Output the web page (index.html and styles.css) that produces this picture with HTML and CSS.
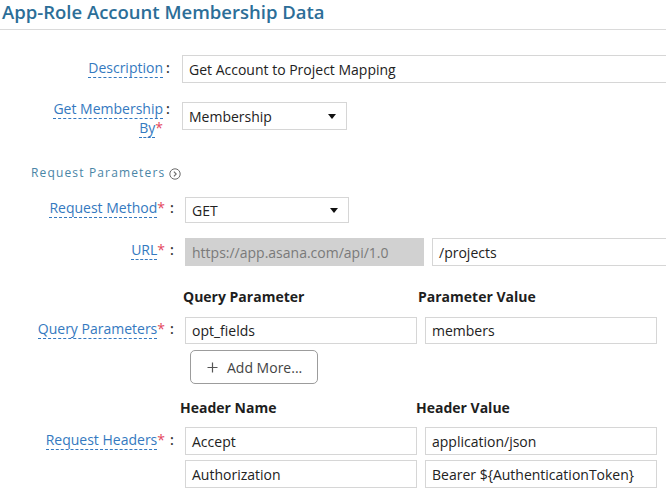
FILE: index.html
```html
<!DOCTYPE html>
<html>
<head>
<meta charset="utf-8">
<link rel="stylesheet" href="styles.css">
</head>
<body>
<div class="page">
  <h1 class="title">App-Role Account Membership Data</h1>

  <div class="sec-top">
    <div class="row row-desc">
      <div class="lbl lbl-up lbl-desc"><span class="lt">Description</span></div>
      <div class="colon colon-up colon-desc">:</div>
      <div class="field field-desc">Get Account to Project Mapping</div>
    </div>
    <div class="row row-memb">
      <div class="lbl lbl-up lbl-memb"><span class="lt">Get Membership By</span><span class="req">*</span></div>
      <div class="colon colon-up colon-memb">:</div>
      <div class="field select select-memb"><span>Membership</span><span class="caret"></span></div>
    </div>
  </div>

  <div class="sec-title">Request Parameters
    <svg class="info" width="12" height="12" viewBox="0 0 12 12"><circle cx="6" cy="6" r="5.2" fill="none" stroke="#6b6b6b" stroke-width="1"/><path d="M4.9 3.6 L7.2 6 L4.9 8.4" fill="none" stroke="#6b6b6b" stroke-width="1.1"/></svg>
  </div>

  <div class="row row-method">
    <div class="lbl lbl-low lbl-p1"><span class="lt">Request Method</span><span class="req">*</span></div>
    <div class="colon colon-low colon-p1">:</div>
    <div class="field select select-method"><span>GET</span><span class="caret"></span></div>
  </div>

  <div class="row row-url">
    <div class="lbl lbl-low lbl-p2"><span class="lt">URL</span><span class="req">*</span></div>
    <div class="colon colon-low colon-p2">:</div>
    <div class="field field-base">https://app.asana.com/api/1.0</div>
    <div class="field field-path">/projects</div>
  </div>

  <div class="hrow hrow-query">
    <div class="hcol hcol-query">Query Parameter</div>
    <div class="hcol">Parameter Value</div>
  </div>

  <div class="row row-opt">
    <div class="lbl lbl-low lbl-p2"><span class="lt">Query Parameters</span><span class="req">*</span></div>
    <div class="colon colon-low colon-p2">:</div>
    <div class="field field-half">opt_fields</div>
    <div class="field field-half field-right">members</div>
  </div>

  <div class="add-row">
    <div class="btn-add">
      <svg width="11" height="11" viewBox="0 0 11 11"><path d="M5.5 0.5 V10.5 M0.5 5.5 H10.5" stroke="#555" stroke-width="1.2" fill="none"/></svg>
      <span>Add More...</span>
    </div>
  </div>

  <div class="hrow hrow-header">
    <div class="hcol hcol-header">Header Name</div>
    <div class="hcol">Header Value</div>
  </div>

  <div class="row row-accept">
    <div class="lbl lbl-low lbl-p3"><span class="lt">Request Headers</span><span class="req">*</span></div>
    <div class="colon colon-low colon-p3">:</div>
    <div class="field field-half">Accept</div>
    <div class="field field-half field-right">application/json</div>
  </div>

  <div class="row row-auth">
    <div class="lbl lbl-low"></div>
    <div class="colon colon-low"></div>
    <div class="field field-half">Authorization</div>
    <div class="field field-half field-right">Bearer ${AuthenticationToken}</div>
  </div>
</div>
</body>
</html>
```

FILE: styles.css
```css
html, body {
  margin: 0;
  padding: 0;
  overflow: hidden;
  background: #fff;
}
body {
  font-family: "Open Sans", "Liberation Sans", sans-serif;
  color: #222;
}
.page {
  width: 666px;
}
.title {
  margin: 0;
  padding: 0 0 5px 2px;
  font-size: 18.5px;
  font-weight: 600;
  line-height: 24px;
  color: #2c6e98;
  border-bottom: 1px solid #dadada;
}
.sec-top {
  padding-top: 25px;
}
.row {
  display: flex;
  align-items: flex-start;
  white-space: nowrap;
}
.lbl {
  flex: none;
  box-sizing: border-box;
  text-align: right;
  font-size: 14px;
  line-height: 19px;
  white-space: normal;
}
.lbl-up {
  width: 163px;
  padding-left: 45px;
}
.lbl-low {
  width: 165px;
}
.lt {
  color: #3479c0;
  border-bottom: 1px dashed #3479c0;
}
.req {
  color: #e4485e;
}
.colon {
  flex: none;
  box-sizing: border-box;
  font-size: 14px;
  line-height: 19px;
  color: #333;
  font-weight: 600;
}
.colon-up {
  width: 19px;
  padding-left: 3px;
}
.colon-low {
  width: 20px;
  padding-left: 5px;
}
.lbl-desc, .colon-desc { padding-top: 3px; }
.lbl-memb, .colon-memb { margin-top: -3px; }
.lbl-p1, .colon-p1 { padding-top: 1px; }
.lbl-p2, .colon-p2 { padding-top: 2px; }
.lbl-p3, .colon-p3 { padding-top: 3px; }

.field {
  flex: none;
  box-sizing: border-box;
  height: 28px;
  border: 1px solid #d6d6d6;
  background: #fff;
  padding: 1px 6px 0;
  font-size: 14px;
  line-height: 25px;
  color: #222;
  overflow: hidden;
}
.field-desc {
  width: 520px;
}
.row-memb {
  margin-top: 19px;
}
.select {
  display: flex;
  justify-content: space-between;
  align-items: center;
  padding-right: 10px;
}
.select-memb {
  width: 165px;
}
.caret {
  width: 0;
  height: 0;
  border-left: 4px solid transparent;
  border-right: 4px solid transparent;
  border-top: 5px solid #111;
}
.sec-title {
  margin-top: 28px;
  padding-left: 31px;
  font-size: 12px;
  line-height: 16px;
  letter-spacing: 1.15px;
  color: #4a85a6;
  display: flex;
  align-items: center;
}
.info {
  margin-left: 4px;
  margin-top: 2px;
}
.row-method {
  margin-top: 16px;
}
.select-method {
  width: 164px;
  height: 26px;
  line-height: 23px;
}
.row-url {
  margin-top: 15px;
}
.field-base {
  width: 239px;
  background: #d1d1d1;
  border-color: #d1d1d1;
  color: #7a7a7a;
}
.field-path {
  width: 300px;
  margin-left: 8px;
}
.hrow {
  display: flex;
  font-size: 14px;
  font-weight: 700;
  line-height: 19px;
  color: #1e1e1e;
}
.hrow-query {
  margin-top: 21px;
  padding-left: 183px;
}
.hcol-query {
  width: 235px;
}
.hrow-header {
  margin-top: 14px;
  padding-left: 180px;
}
.hcol-header {
  width: 236px;
}
.row-opt {
  margin-top: 11px;
}
.row-opt .field {
  height: 27px;
  line-height: 24px;
}
.field-half {
  width: 232px;
}
.field-right {
  margin-left: 8px;
}
.add-row {
  margin-top: 6px;
  padding-left: 190px;
}
.btn-add {
  box-sizing: border-box;
  width: 128px;
  height: 34px;
  border: 1px solid #9c9c9c;
  border-radius: 5px;
  display: flex;
  align-items: center;
  padding-left: 16px;
  gap: 9px;
  font-size: 14px;
  color: #444;
}
.row-accept {
  margin-top: 10px;
}
.row-auth {
  margin-top: 5px;
}
```
